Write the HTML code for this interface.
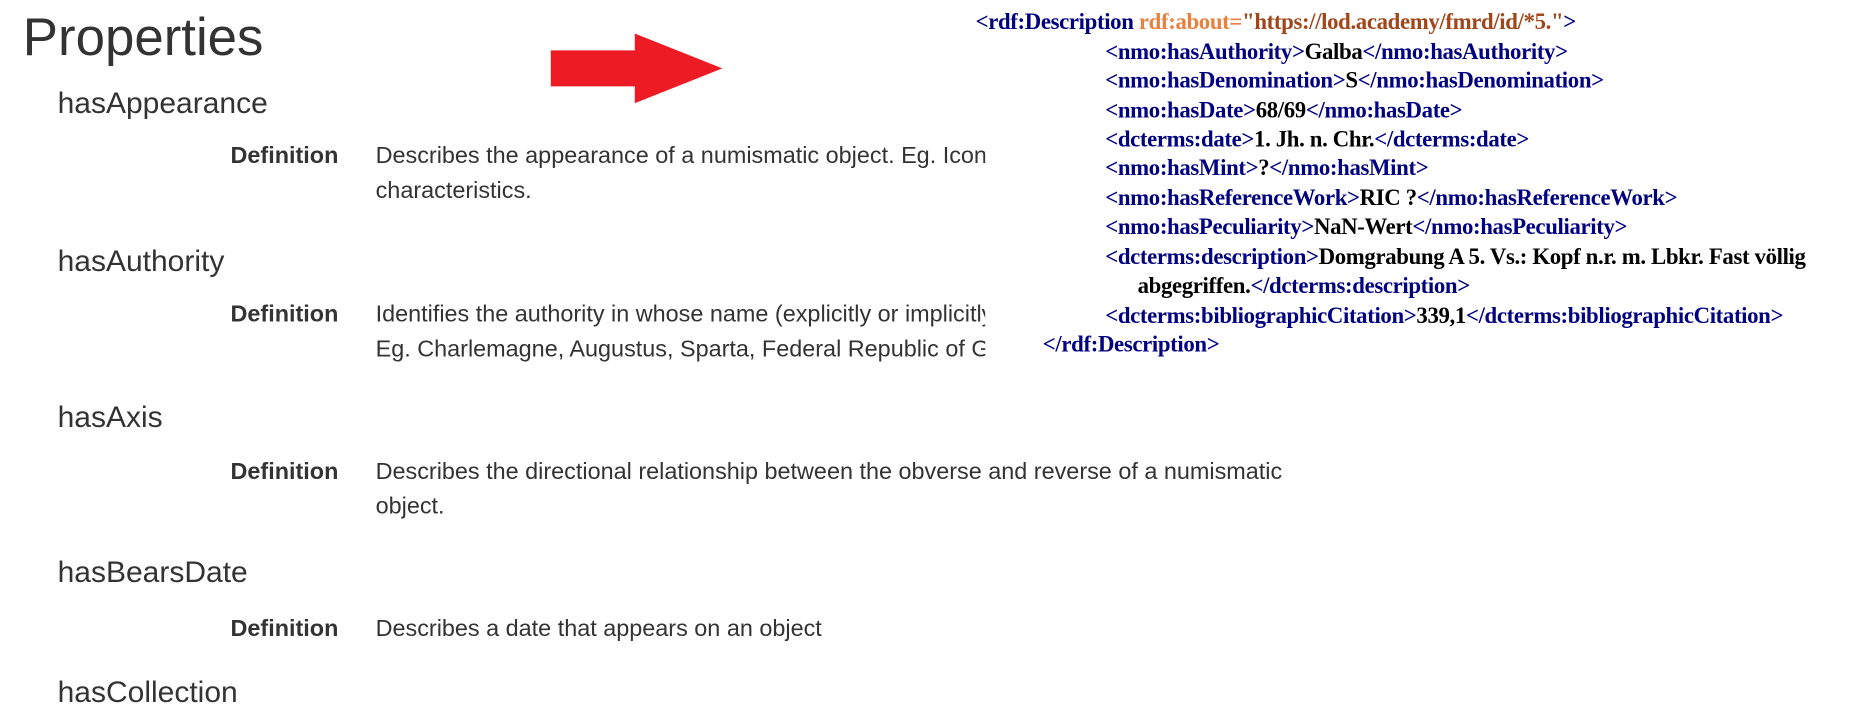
<!DOCTYPE html>
<html><head><meta charset="utf-8"><style>
html,body{margin:0;padding:0;background:#fff;overflow:hidden;width:1859px;height:713px}
#w{position:absolute;left:0;top:0;width:1549px;height:594px;transform:scale(1.2);transform-origin:0 0;font-family:"Liberation Sans",Arial,sans-serif;color:#333}
.a{position:absolute;white-space:nowrap;line-height:1}
h1{position:absolute;margin:0;left:19px;top:10px;font-size:44px;font-weight:normal;line-height:1}
.h{font-size:25px}
.d{font-size:19.5px;font-weight:bold;width:94px;text-align:right;left:188px}
.t{font-size:19.5px;left:313px;line-height:29px;white-space:nowrap}
#ov{position:absolute;left:821px;top:0;width:728px;height:305px;background:#fff}
.x{position:absolute;font-family:"Liberation Serif","Times New Roman",serif;font-weight:bold;font-size:19px;color:#000;white-space:nowrap;line-height:1;letter-spacing:-0.3px}
.x b{color:#000080}
.x i{font-style:normal;color:#e8813f}
.x u{text-decoration:none;color:#a0461a}
</style></head><body><div id="w">
<h1>Properties</h1>
<div class="a h" style="left:48px;top:74px">hasAppearance</div>
<div class="a d" style="top:121px">Definition</div>
<div class="a t" style="top:116px">Describes the appearance of a numismatic object. Eg. Iconography, legends, or other visual<br>characteristics.</div>
<div class="a h" style="left:48px;top:206px">hasAuthority</div>
<div class="a d" style="top:253px">Definition</div>
<div class="a t" style="top:248px">Identifies the authority in whose name (explicitly or implicitly) a numismatic object was issued.<br>Eg. Charlemagne, Augustus, Sparta, Federal Republic of Germany.</div>
<div class="a h" style="left:48px;top:336px">hasAxis</div>
<div class="a d" style="top:384px">Definition</div>
<div class="a t" style="top:379px">Describes the directional relationship between the obverse and reverse of a numismatic<br>object.</div>
<div class="a h" style="left:48px;top:465px">hasBearsDate</div>
<div class="a d" style="top:515px">Definition</div>
<div class="a t" style="top:510px">Describes a date that appears on an object</div>
<div class="a h" style="left:48px;top:565px">hasCollection</div>
<svg style="position:absolute;left:454px;top:25px" width="155" height="65"><polygon points="5,17 75,17 75,3 148,32 75,61 75,47 5,47" fill="#ed1c24"/></svg>
<div id="ov"></div>
<div class="x" style="left:813px;top:9px"><b>&lt;rdf:Description </b><i>rdf:about=</i><u>"https://lod.academy/fmrd/id/*5."</u><b>&gt;</b></div>
<div class="x" style="left:921px;top:34px"><b>&lt;nmo:hasAuthority&gt;</b>Galba<b>&lt;/nmo:hasAuthority&gt;</b></div>
<div class="x" style="left:921px;top:58px"><b>&lt;nmo:hasDenomination&gt;</b>S<b>&lt;/nmo:hasDenomination&gt;</b></div>
<div class="x" style="left:921px;top:83px"><b>&lt;nmo:hasDate&gt;</b>68/69<b>&lt;/nmo:hasDate&gt;</b></div>
<div class="x" style="left:921px;top:107px"><b>&lt;dcterms:date&gt;</b>1. Jh. n. Chr.<b>&lt;/dcterms:date&gt;</b></div>
<div class="x" style="left:921px;top:131px"><b>&lt;nmo:hasMint&gt;</b>?<b>&lt;/nmo:hasMint&gt;</b></div>
<div class="x" style="left:921px;top:156px"><b>&lt;nmo:hasReferenceWork&gt;</b>RIC ?<b>&lt;/nmo:hasReferenceWork&gt;</b></div>
<div class="x" style="left:921px;top:180px"><b>&lt;nmo:hasPeculiarity&gt;</b>NaN-Wert<b>&lt;/nmo:hasPeculiarity&gt;</b></div>
<div class="x" style="left:921px;top:205px"><b>&lt;dcterms:description&gt;</b>Domgrabung A 5. Vs.: Kopf n.r. m. Lbkr. Fast völlig</div>
<div class="x" style="left:948px;top:229px">abgegriffen.<b>&lt;/dcterms:description&gt;</b></div>
<div class="x" style="left:921px;top:254px"><b>&lt;dcterms:bibliographicCitation&gt;</b>339,1<b>&lt;/dcterms:bibliographicCitation&gt;</b></div>
<div class="x" style="left:869px;top:278px"><b>&lt;/rdf:Description&gt;</b></div>
</div></body></html>
